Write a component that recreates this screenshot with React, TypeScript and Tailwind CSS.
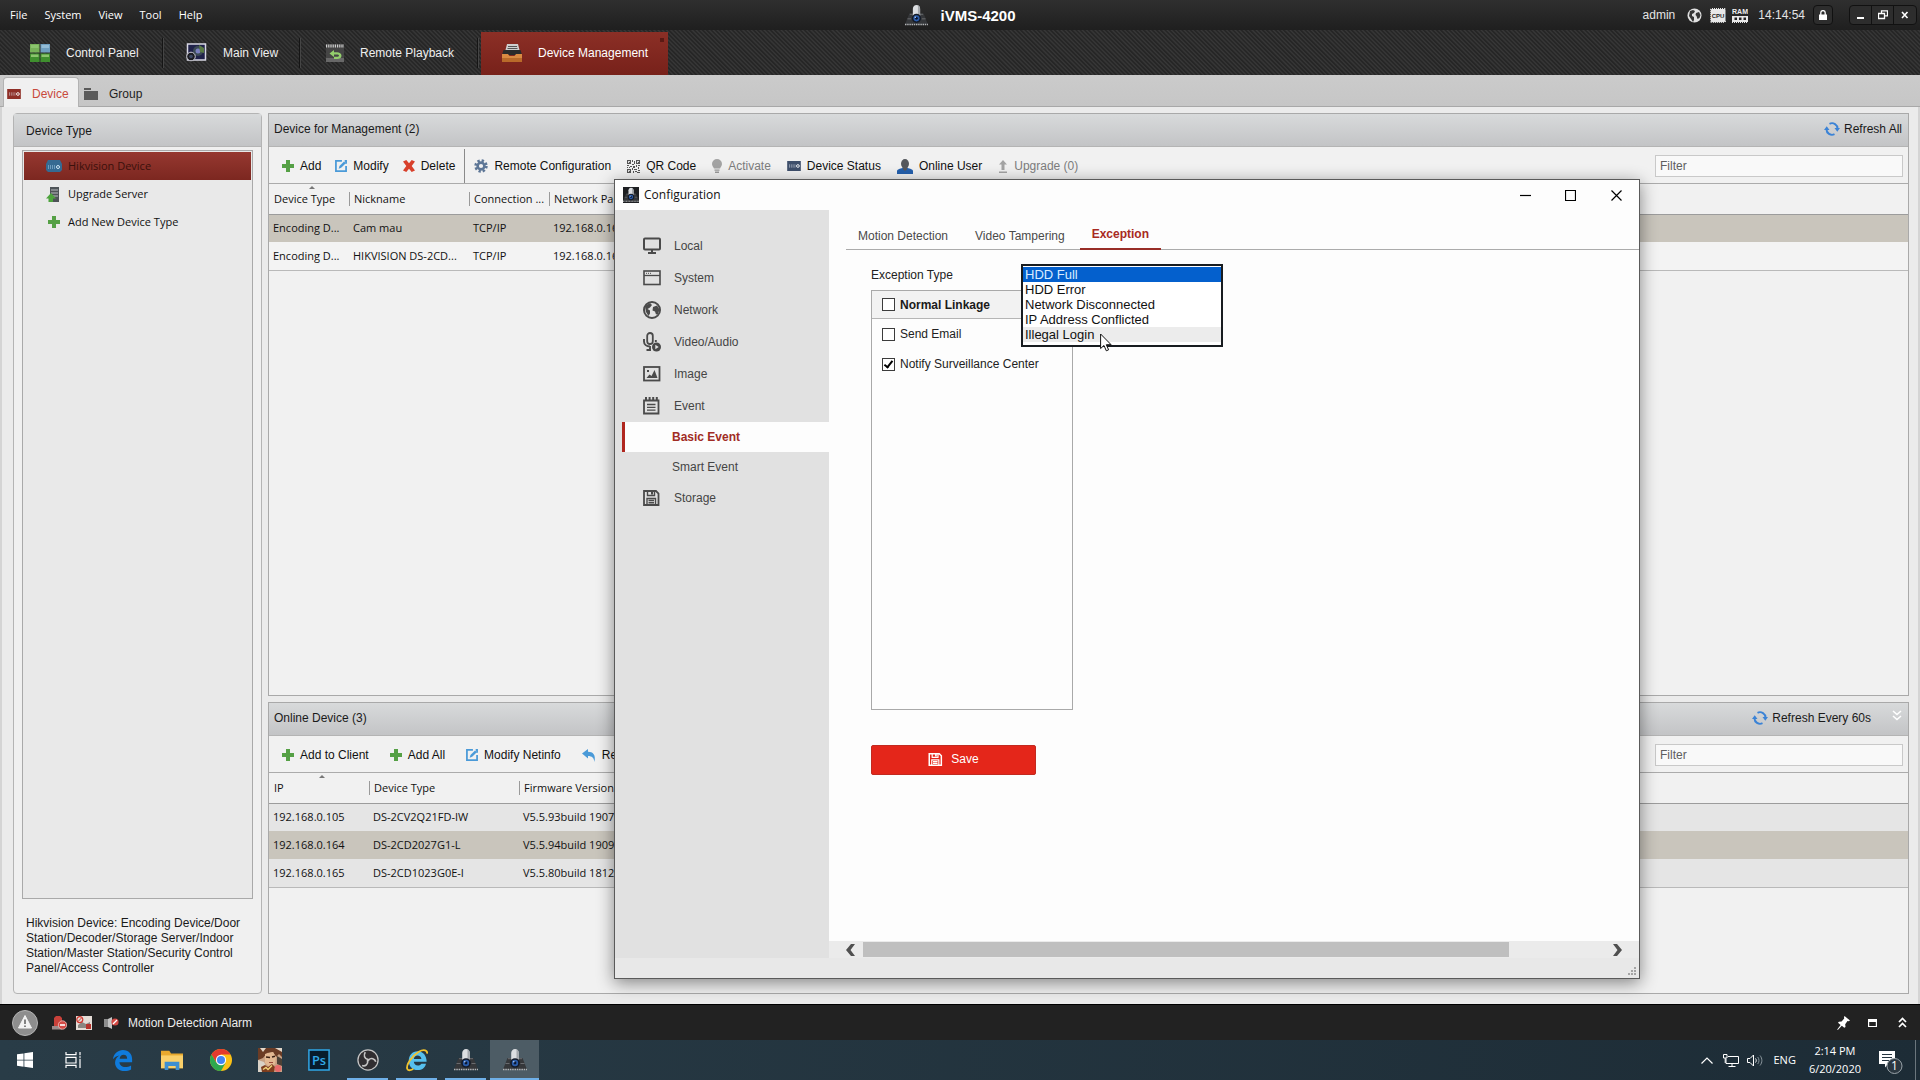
import React, { useState } from 'react';
import clsx from 'clsx';

type IconProps = { className?: string };

/* ---------- Shared drawings ---------- */

function CameraLogo({ className }: IconProps) {
  return (
    <svg viewBox="0 0 24 22" className={className} aria-hidden="true">
      <path d="M4.500 9h15l4.500 11.500H0z" fill="#35373a" />
      <path d="M5 9.700h14M2.500 14.500h4M17.500 14.500h4" stroke="#77797c" strokeWidth=".8" />
      <path d="M0 20.500h24" stroke="#b4b6b8" strokeWidth="1.600" strokeDasharray="1.500 .8" />
      <path d="M8.200 4C8.200 1.800 9.900 0 12 0s3.800 1.800 3.800 4v7.500H8.200z" fill="#dcdee1" />
      <path d="M13.500 .3c1.400.6 2.300 2 2.300 3.700v7.500h-2.300z" fill="#a4a8ad" />
      <circle cx="12" cy="14" r="4.800" fill="#141b28" />
      <circle cx="12" cy="14" r="3.200" fill="#2a5cab" />
      <circle cx="12" cy="14" r="1.400" fill="#0b1730" />
      <circle cx="10.800" cy="12.800" r=".8" fill="#bcd4f5" />
    </svg>
  );
}

function PlusIcon({ className }: IconProps) {
  return (
    <svg viewBox="0 0 12 12" className={className} aria-hidden="true">
      <path d="M4 0h4v4h4v4H8v4H4V8H0V4h4z" fill="#55a045" />
    </svg>
  );
}

function ModifyIcon({ className }: IconProps) {
  return (
    <svg viewBox="0 0 13 13" className={className} aria-hidden="true">
      <path d="M7.500 1H1v11h11V6.500M12 4V1h-1.500" fill="none" stroke="#4a9ad8" strokeWidth="1.900" />
      <path d="M4 9.500l.8-3L9.800 1.500l1.900 1.900-5 5z" fill="#4a9ad8" />
    </svg>
  );
}

function DeleteIcon({ className }: IconProps) {
  return (
    <svg viewBox="0 0 12 12" className={className} aria-hidden="true">
      <path d="M0 1.500L3.300 0 6 3.300 8.700 0 12 1.500 8.700 6l3.300 4.500L8.700 12 6 8.700 3.300 12 0 10.500 3.300 6z" fill="#d8402b" />
    </svg>
  );
}

function GearIcon({ className }: IconProps) {
  return (
    <svg viewBox="0 0 14 14" className={className} aria-hidden="true">
      <circle cx="7" cy="7" r="5.400" fill="none" stroke="#5d7696" strokeWidth="2.600" strokeDasharray="2.300 1.940" />
      <circle cx="7" cy="7" r="3.400" fill="none" stroke="#5d7696" strokeWidth="2.600" />
    </svg>
  );
}

function QrIcon({ className }: IconProps) {
  return (
    <svg viewBox="0 0 13 13" className={className} shapeRendering="crispEdges" aria-hidden="true">
      <path
        d="M0 0h4v4H0zM9 0h4v4H9zM0 9h4v4H0zM5 0h1v2H5zM7 1h1v3H7zM5 4h2v1H5zM0 5h2v1H0zM3 6h2v1H3zM6 6h2v2H6zM9 5h1v2H9zM11 5h2v1h-2zM11 7h1v2h-1zM0 7h1v1H0zM5 8h1v2H5zM7 9h2v1H7zM9 9h1v1H9zM11 10h2v1h-2zM6 11h1v2H6zM8 11h2v1H8zM10 12h3v1h-3zM2 7h1v1H2z"
        fill="#555"
      />
      <path d="M1 1h2v2H1zM10 1h2v2h-2zM1 10h2v2H1z" fill="#ddd" />
      <path d="M1.500 1.500h1v1h-1zM10.500 1.500h1v1h-1zM1.500 10.500h1v1h-1z" fill="#555" />
    </svg>
  );
}

function BulbIcon({ className }: IconProps) {
  return (
    <svg viewBox="0 0 10 14" className={className} aria-hidden="true">
      <path d="M5 0a5 5 0 0 1 5 5c0 2-1.500 3-2 4.500H2C1.500 8 0 7 0 5a5 5 0 0 1 5-5z" fill="#a3a3a3" />
      <path d="M2.500 10.500h5v1.200h-5zM3 12.500h4V14H3z" fill="#9a9a9a" />
    </svg>
  );
}

function RecorderIcon({ className }: IconProps) {
  return (
    <svg viewBox="0 0 15 11" className={className} aria-hidden="true">
      <path d="M0 0h15v11H0z" fill="currentColor" />
      <path d="M2 4.500h7M2 6.500h7" stroke="#dfe5ee" strokeWidth="1" strokeDasharray="1 1" />
      <circle cx="11.800" cy="5.500" r="1.500" fill="none" stroke="#fff" />
    </svg>
  );
}

function UserIcon({ className }: IconProps) {
  return (
    <svg viewBox="0 0 16 15" className={className} aria-hidden="true">
      <path d="M0 15v-3C0 10.500 3 9.500 5.500 9h5c2.500.5 5.500 1.500 5.500 3v3z" fill="#2560ad" />
      <ellipse cx="8" cy="4.800" rx="4" ry="4.800" fill="#54575c" />
      <path d="M6 8h4v2.500L8 12l-2-1.500z" fill="#55585d" />
    </svg>
  );
}

function UpgradeIcon({ className }: IconProps) {
  return (
    <svg viewBox="0 0 10 13" className={className} aria-hidden="true">
      <path d="M5 0l4 4.500H6.500V10h-3V4.500H1zM1 11.500h8V13H1z" fill="#a3a3a3" />
    </svg>
  );
}

function ResetIcon({ className }: IconProps) {
  return (
    <svg viewBox="0 0 14 13" className={className} aria-hidden="true">
      <path d="M0 4.500L6 0v2.700c5 0 8 3 6.500 10.300C12 9 10 7 6 7v2.500z" fill="#4a9ad8" />
    </svg>
  );
}

function RefreshIcon({ className }: IconProps) {
  return (
    <svg viewBox="0 0 16 14" className={className} aria-hidden="true">
      <path d="M5.500 1.800a5.500 5.500 0 0 1 8 5.200M10.500 12.200a5.500 5.500 0 0 1-8-5.200" fill="none" stroke="#3b83d6" strokeWidth="1.900" />
      <path d="M10.500 6H16l-2.700 3.800zM0 8l2.700-3.800L5.500 8z" fill="#3b83d6" />
    </svg>
  );
}

/* ---------- Title bar and module navigation ---------- */

const MENUS = ['File', 'System', 'View', 'Tool', 'Help'];

function TitleBar() {
  return (
    <header className="relative flex h-[30px] items-center justify-between bg-linear-to-b from-[#2f2f2f] to-[#1f1f1f] px-[10px] text-white">
      <nav className="flex gap-[17px] font-['Open_Sans',sans-serif] text-[11px]">
        {MENUS.map(m => (
          <button key={m} type="button">{m}</button>
        ))}
      </nav>
      <div className="absolute left-1/2 top-0 flex h-[30px] -translate-x-1/2 items-center gap-3">
        <CameraLogo className="h-[21px] w-6" />
        <h1 className="pt-0.5 text-[15px] font-bold">iVMS-4200</h1>
      </div>
      <div className="flex items-center text-xs text-[#e4e4e4]">
        <span className="mr-3">admin</span>
        <svg viewBox="0 0 15 15" className="mr-2 size-[15px]" aria-hidden="true">
          <circle cx="7.500" cy="7.500" r="7" fill="#e0e0e0" />
          <path d="M3 3l3-1 2 1-1 2-2 1v2l2 1v3l-1 2-2-3-2-3zM9 5l3-1 1.500 3-1 3-2 1-1-3-1-1z" fill="#333" />
        </svg>
        <svg viewBox="0 0 16 15" className="mr-[6px] h-[15px] w-4" aria-hidden="true">
          <rect x="1" y="1" width="14" height="13" rx="1" fill="#e8e8e8" stroke="#e8e8e8" strokeWidth="2" strokeDasharray="1 1" />
          <text x="8" y="10" textAnchor="middle" fontSize="6" fontWeight="700" fill="#1c1c1c">CPU</text>
        </svg>
        <svg viewBox="0 0 16 15" className="mr-[10px] h-[15px] w-4" aria-hidden="true">
          <text x="8" y="6" textAnchor="middle" fontSize="7" fontWeight="700" fill="#efefef">RAM</text>
          <path d="M0 8h16v6H0z" fill="#e8e8e8" />
          <path d="M2.500 9.500h2.500v2.500H2.500zM7 9.500h2.500v2.500H7zM11.500 9.500H14v2.500h-2.500z" fill="#222" />
          <path d="M0 14.500h16" stroke="#e8e8e8" strokeDasharray="1 1" />
        </svg>
        <time className="mr-2">14:14:54</time>
        <button type="button" aria-label="Lock" className="mr-4 flex h-5 w-5 items-center justify-center rounded-sm border border-[#111] bg-[#2d2d2d]">
          <svg viewBox="0 0 8 10" className="h-[10px] w-2">
            <path d="M0 4.500h8V10H0z" fill="#fff" />
            <path d="M1.800 5V2.800a2.200 2.200 0 0 1 4.400 0V5" fill="none" stroke="#fff" strokeWidth="1.300" />
          </svg>
        </button>
        <div className="-mr-[7px] flex rounded-sm border border-[#111] bg-[#2d2d2d]">
          <button type="button" aria-label="Minimize" className="flex h-[18px] w-[22px] items-center justify-center border-r border-[#111]">
            <svg viewBox="0 0 10 10" className="size-[10px]"><path d="M1 7h7v2H1z" fill="#fff" /></svg>
          </button>
          <button type="button" aria-label="Restore" className="flex h-[18px] w-[22px] items-center justify-center border-r border-[#111]">
            <svg viewBox="0 0 10 10" className="size-[10px]"><path d="M3.500 3V.8h6v5H7.200M.5 3.500h6v5h-6z" fill="none" stroke="#fff" strokeWidth="1.300" /></svg>
          </button>
          <button type="button" aria-label="Close" className="flex h-[18px] w-[22px] items-center justify-center">
            <svg viewBox="0 0 10 10" className="size-[10px]"><path d="M2 2l5.500 6M7.500 2L2 8" fill="none" stroke="#fff" strokeWidth="1.600" /></svg>
          </button>
        </div>
      </div>
    </header>
  );
}

function ControlPanelIcon() {
  return (
    <svg viewBox="0 0 20 18" className="h-[18px] w-5" aria-hidden="true">
      <path d="M0 0h9.500v8.500H0z" fill="#77b259" />
      <path d="M10.500 0H20v8.500h-9.500z" fill="#6f9fc0" />
      <path d="M0 9.500h9.500V18H0zM10.500 9.500H20V18h-9.500z" fill="#3f8f2e" />
      <path d="M1 1h7.500v3H1zM1 10.500h7.500v2.500H1zM11.500 10.500H19v2.500h-7.500z" fill="#8cc46e" />
      <path d="M11.500 1H19v3h-7.500z" fill="#93bcd6" />
    </svg>
  );
}

function MainViewIcon() {
  return (
    <svg viewBox="0 0 22 19" className="h-[19px] w-[22px]" aria-hidden="true">
      <path d="M2.500 1h18v16h-18z" fill="#20224a" stroke="#d8d8e4" strokeWidth="1.500" />
      <circle cx="13" cy="8" r="5" fill="#3c4a55" />
      <circle cx="13" cy="8" r="2.500" fill="#7a7fc0" />
      <path d="M14 2l5 3v5l-4-1z" fill="#5a7a45" />
      <circle cx="6" cy="13.500" r="4.300" fill="#1c1c22" stroke="#c9c9d2" />
      <circle cx="6" cy="13.500" r="1.800" fill="#3e4a66" />
    </svg>
  );
}

function PlaybackIcon() {
  return (
    <svg viewBox="0 0 18 18" className="size-[18px]" aria-hidden="true">
      <path d="M0 0h18v18H0z" fill="#454545" />
      <path d="M0 2h18" stroke="#cfcfcf" strokeWidth="3" strokeDasharray="1.200 1" />
      <path d="M0 14h18v4H0z" fill="#686868" />
      <path d="M3.500 9.500L8 6v2.200h3c2.500 0 4.500 1.300 4.500 3.600S13.500 15 11 15H8v-2.200h3c1.200 0 2-.3 2-1.200s-.8-1.200-2-1.200H8V13z" fill="#93cf6c" />
    </svg>
  );
}

function DeviceManagementIcon() {
  return (
    <svg viewBox="0 0 20 18" className="h-[18px] w-5" aria-hidden="true">
      <path d="M5 0h11l2 8H3z" fill="#cfcfcf" />
      <path d="M6 2.500h9M5.500 4.500h10" stroke="#555" />
      <path d="M1.500 6h17L20 11H0z" fill="#2b2b2b" />
      <path d="M0 10h6l1.500 2h5L14 10h6v8H0z" fill="#d98a42" />
      <path d="M0 14h20v4H0z" fill="#b96a2a" />
    </svg>
  );
}

const MODULES = [
  { label: 'Control Panel', Icon: ControlPanelIcon, box: 'w-[163px] pl-[30px] gap-4' },
  { label: 'Main View', Icon: MainViewIcon, box: 'w-[137px] pl-[22px] gap-4' },
  { label: 'Remote Playback', Icon: PlaybackIcon, box: 'w-[178px] pl-[26px] gap-4' },
];

function ModuleBar() {
  return (
    <nav className="flex h-[45px] items-center bg-[#303030] bg-[repeating-linear-gradient(45deg,#262626_0px,#262626_1px,#383838_2px,#2e2e2e_3px)] text-xs text-[#efefef]">
      {MODULES.map(({ label, Icon, box }) => (
        <button key={label} type="button" className={clsx('flex h-[30px] items-center border-r border-[#151515] shadow-[1px_0_0_#454545]', box)}>
          <Icon />
          {label}
        </button>
      ))}
      <button type="button" className="relative ml-[3px] mt-0.5 flex h-[43px] w-[187px] items-center gap-4 bg-linear-to-b from-[#8c2f26] to-[#77211a] pb-0.5 pl-[21px] text-white">
        <DeviceManagementIcon />
        Device Management
        <span className="absolute right-1 top-1.5 size-1 bg-[#5a1a14]" />
      </button>
    </nav>
  );
}

function PageTabs() {
  return (
    <div role="tablist" className="flex h-8 items-end border-b border-[#a8a8a8] bg-linear-to-b from-[#cbcbcb] to-[#c6c6c6] pl-[3px] text-xs">
      <button role="tab" aria-selected="true" type="button" className="-mb-px flex h-[30px] w-[76px] items-center gap-[10px] rounded-t border border-b-0 border-[#b2b2b2] bg-[#f0f0f0] pl-0.5 pt-0.5 text-[#c84a3c]">
        <RecorderIcon className="h-[10px] w-4 text-[#8f2f27]" />
        Device
      </button>
      <button role="tab" aria-selected="false" type="button" className="flex h-6 items-center gap-[11px] pl-[5px] text-[#1e1e1e]">
        <svg viewBox="0 0 14 12" className="h-3 w-[14px]" aria-hidden="true">
          <path d="M0 0h7v2H0zM0 3h14v9H0z" fill="#5a5a5a" />
        </svg>
        Group
      </button>
    </div>
  );
}

/* ---------- Left panel ---------- */

function DeviceTypePanel() {
  return (
    <aside className="flex w-[249px] shrink-0 flex-col rounded-sm border border-[#b4b4b4] bg-[#f0f0f0]">
      <h2 className="flex h-[33px] items-center border-b border-[#b4b4b4] bg-linear-to-b from-[#d8dadb] to-[#c3c4c6] pl-3 pt-0.5 text-xs text-[#1a1a1a]">Device Type</h2>
      <ul className="mx-2 mt-[3px] flex-1 border border-[#a9a9a9] bg-[#e9e9e9] p-px font-['Open_Sans',sans-serif] text-[11px] text-[#111]">
        <li className="flex h-7 items-center gap-[6px] bg-linear-to-b from-[#963830] to-[#7c2720] pl-[22px] text-[#3a100c]">
          <svg viewBox="0 0 16 12" className="h-3 w-4" aria-hidden="true">
            <path d="M2 0h12l2 4v6l-2 2H2l-2-2V4z" fill="#356a92" />
            <path d="M2 6h7M2 8h7" stroke="#a9d0ea" strokeDasharray="1 1" />
            <circle cx="12" cy="7" r="1.500" fill="none" stroke="#cfe6f5" />
          </svg>
          Hikvision Device
        </li>
        <li className="flex h-7 items-center gap-[6px] pl-[22px]">
          <svg viewBox="0 0 16 15" className="h-[15px] w-4" aria-hidden="true">
            <path d="M4 0h9v15H4z" fill="#4e5357" />
            <path d="M5 3h7M5 6h7M5 9h7" stroke="#b8bcc0" />
            <path d="M5 6l5 5.500H7V15H2.500v-3.500H0z" fill="#4da33c" />
          </svg>
          Upgrade Server
        </li>
        <li className="flex h-7 items-center gap-[6px] pl-[22px]">
          <PlusIcon className="mx-0.5 size-3" />
          Add New Device Type
        </li>
      </ul>
      <p className="h-[94px] px-3 pt-[17px] text-xs leading-[15px] text-[#1a1a1a]">
        Hikvision Device: Encoding Device/Door Station/Decoder/Storage Server/Indoor Station/Master Station/Security Control Panel/Access Controller
      </p>
    </aside>
  );
}

/* ---------- Device tables ---------- */

function ToolButton({ icon, label, disabled }: { icon: React.ReactNode; label: string; disabled?: boolean }) {
  return (
    <button type="button" disabled={disabled} className="flex items-center gap-[6px] whitespace-nowrap text-[#111] disabled:text-[#7d7d7d]">
      {icon}
      {label}
    </button>
  );
}

function FilterBox({ id }: { id: string }) {
  return (
    <>
      <label htmlFor={id} className="sr-only">Filter</label>
      <input id={id} type="text" placeholder="Filter" className="ml-auto mr-[5px] h-[22px] w-[248px] border border-[#c9c9c9] bg-[#f9f9f9] px-1 text-xs placeholder:text-[#5e5e5e]" />
    </>
  );
}

interface GridProps {
  columns: { label: string; width?: string }[];
  rows: string[][];
  selected: number;
  shaded?: boolean;
}

function DeviceGrid({ columns, rows, selected, shaded }: GridProps) {
  return (
    <table className="w-full table-fixed border-collapse font-['Open_Sans',sans-serif] text-[11px] text-[#111]">
      <thead>
        <tr className="h-[30px] border-b border-[#9c9c9c]">
          {columns.map((c, i) => (
            <th key={c.label} className={clsx('relative p-0 text-left font-normal', c.width)}>
              {i === 0 && (
                <svg viewBox="0 0 6 3" className="absolute left-1/2 top-0.5 h-[3px] w-[6px]" aria-hidden="true">
                  <path d="M3 0l3 3H0z" fill="#777" />
                </svg>
              )}
              <div className={clsx('overflow-hidden whitespace-nowrap border-l pl-1 leading-[14px]', i === 0 ? 'border-transparent' : 'border-[#9a9a9a]')}>{c.label}</div>
            </th>
          ))}
        </tr>
      </thead>
      <tbody>
        {rows.map((row, r) => (
          <tr key={row[0] + r} className={clsx('h-7 last:border-b last:border-[#b9b9b9]', r === selected ? 'bg-[#c9c5bc]' : shaded ? 'bg-[#e5e5e5]' : 'bg-[#f3f3f3]')}>
            {row.map((cell, i) => (
              <td key={i} className="overflow-hidden whitespace-nowrap py-0 pl-1 pr-0">{cell}</td>
            ))}
          </tr>
        ))}
      </tbody>
    </table>
  );
}

const PANEL_HEAD = 'flex h-[33px] shrink-0 items-center border-b border-[#b4b4b4] bg-linear-to-b from-[#d8dadb] to-[#c3c4c6] pb-[3px] pl-[5px] text-xs text-[#1a1a1a]';
const TOOLBAR = 'flex h-[37px] shrink-0 items-center border-b border-[#ababab] pl-[13px] pt-0.5 text-xs';

function ManagementPanel() {
  return (
    <section className="flex h-[583px] shrink-0 flex-col border border-[#a9a9a9] bg-[#f1f1f1]">
      <div className={PANEL_HEAD}>
        <h2>Device for Management (2)</h2>
        <button type="button" className="ml-auto mr-[6px] flex items-center gap-1">
          <RefreshIcon className="h-[14px] w-4" />
          Refresh All
        </button>
      </div>
      <div className={TOOLBAR}>
        <div className="flex h-full items-center gap-[14px] border-r border-[#8a8a8a] pr-[9px]">
          <ToolButton icon={<PlusIcon className="size-3" />} label="Add" />
          <ToolButton icon={<ModifyIcon className="size-3" />} label="Modify" />
          <ToolButton icon={<DeleteIcon className="size-3" />} label="Delete" />
        </div>
        <div className="flex items-center gap-4 pl-[9px]">
          <ToolButton icon={<GearIcon className="size-[14px]" />} label="Remote Configuration" />
          <ToolButton icon={<QrIcon className="size-[13px]" />} label="QR Code" />
          <ToolButton icon={<BulbIcon className="h-[14px] w-[10px]" />} label="Activate" disabled />
          <ToolButton icon={<RecorderIcon className="h-[10px] w-[14px] text-[#3e4f6b]" />} label="Device Status" />
          <ToolButton icon={<UserIcon className="h-[15px] w-4" />} label="Online User" />
          <ToolButton icon={<UpgradeIcon className="h-[13px] w-[10px]" />} label="Upgrade (0)" disabled />
        </div>
        <FilterBox id="device-filter" />
      </div>
      <DeviceGrid
        columns={[
          { label: 'Device Type', width: 'w-20' },
          { label: 'Nickname', width: 'w-[120px]' },
          { label: 'Connection ...', width: 'w-20' },
          { label: 'Network Parameters' },
        ]}
        rows={[
          ['Encoding D...', 'Cam mau', 'TCP/IP', '192.168.0.164:8000'],
          ['Encoding D...', 'HIKVISION DS-2CD...', 'TCP/IP', '192.168.0.165:8000'],
        ]}
        selected={0}
      />
    </section>
  );
}

function OnlinePanel() {
  return (
    <section className="flex flex-1 flex-col border border-[#a9a9a9] bg-[#f1f1f1]">
      <div className={PANEL_HEAD}>
        <h2>Online Device (3)</h2>
        <button type="button" className="ml-auto flex items-center gap-1">
          <RefreshIcon className="h-[14px] w-4" />
          Refresh Every 60s
        </button>
        <button type="button" aria-label="Collapse" className="ml-[21px] mr-[6px]">
          <svg viewBox="0 0 10 11" className="mb-1 h-[11px] w-[10px]">
            <path d="M1 1l4 3.500L9 1M1 6l4 3.500L9 6" fill="none" stroke="#fff" strokeWidth="1.600" />
          </svg>
        </button>
      </div>
      <div className={TOOLBAR}>
        <div className="flex items-center gap-[21px]">
          <ToolButton icon={<PlusIcon className="size-3" />} label="Add to Client" />
          <ToolButton icon={<PlusIcon className="size-3" />} label="Add All" />
          <ToolButton icon={<ModifyIcon className="size-3" />} label="Modify Netinfo" />
          <ToolButton icon={<ResetIcon className="h-[13px] w-[14px]" />} label="Reset Password" />
        </div>
        <FilterBox id="online-filter" />
      </div>
      <DeviceGrid
        columns={[
          { label: 'IP', width: 'w-[100px]' },
          { label: 'Device Type', width: 'w-[150px]' },
          { label: 'Firmware Version' },
        ]}
        rows={[
          ['192.168.0.105', 'DS-2CV2Q21FD-IW', 'V5.5.93build 190710'],
          ['192.168.0.164', 'DS-2CD2027G1-L', 'V5.5.94build 190909'],
          ['192.168.0.165', 'DS-2CD1023G0E-I', 'V5.5.80build 181210'],
        ]}
        selected={1}
        shaded
      />
    </section>
  );
}

/* ---------- Configuration window ---------- */

const NAV_ICONS: Record<string, React.ReactNode> = {
  Local: (
    <>
      <rect x="1" y="1.500" width="16" height="11" rx="1" fill="none" stroke="#4a4a4a" strokeWidth="2" />
      <path d="M8 12h2v3h3v2H5v-2h3z" fill="#4a4a4a" />
    </>
  ),
  System: (
    <>
      <rect x="1" y="2" width="16" height="13.500" fill="none" stroke="#4a4a4a" strokeWidth="1.600" />
      <path d="M1 6.500h16" stroke="#4a4a4a" strokeWidth="1.300" />
      <path d="M3 4.300h6" stroke="#4a4a4a" strokeDasharray="1 1" />
    </>
  ),
  Network: (
    <>
      <circle cx="9" cy="9" r="8" fill="none" stroke="#4a4a4a" strokeWidth="2" />
      <path d="M2 5l5-3 2 2-2 2.500L4.500 8 7 9.500v3L5.500 15 3 11zM10 6l4-1.500 2.500 4L15 13l-2 .5-1-3-2.500-1z" fill="#4a4a4a" />
    </>
  ),
  'Video/Audio': (
    <>
      <rect x="4.200" y="0" width="5.600" height="11" rx="2.800" fill="none" stroke="#4a4a4a" strokeWidth="1.800" />
      <path d="M1 6v2.500c0 3 2.500 5 6 5M7 13v4M3.500 17H8M12.800 7v2" fill="none" stroke="#4a4a4a" strokeWidth="1.900" />
      <circle cx="13.500" cy="14" r="4.500" fill="#4a4a4a" />
      <path d="M12.300 11.800l3.400 2.200-3.400 2.200z" fill="#e1e1e1" />
    </>
  ),
  Image: (
    <>
      <rect x="1" y="2" width="15.500" height="13.500" fill="none" stroke="#4a4a4a" strokeWidth="1.800" />
      <path d="M3.500 13l3-3.500L8.500 11l3-6 3 8zM4 5h2v2H4z" fill="#4a4a4a" />
    </>
  ),
  Event: (
    <>
      <path d="M1 3.500h14.500v13H1z" fill="none" stroke="#4a4a4a" strokeWidth="1.800" />
      <path d="M2 1.500h13" stroke="#4a4a4a" strokeWidth="3" strokeDasharray="2 1.600" />
      <path d="M4 7.500h8.500M4 10.300h8.500M4 13.100h8.500" stroke="#4a4a4a" strokeWidth="1.300" />
    </>
  ),
  Storage: <SaveShape color="#4a4a4a" />,
};

function SaveShape({ color }: { color: string }) {
  return (
    <>
      <path d="M1 2h12l2.500 2.500V16H1z" fill="none" stroke={color} strokeWidth="1.800" />
      <path d="M4.500 2v4.500h7V2M4 15.500V9.500h8.500v6M5.500 11.500h5.500M5.500 13.700h5.500" fill="none" stroke={color} strokeWidth="1.400" />
      <path d="M8 2.500h2v3H8z" fill={color} />
    </>
  );
}

function NavItem({ label }: { label: string }) {
  return (
    <li>
      <a href="#" className="flex h-8 items-center gap-[13px] pl-7">
        <svg viewBox="0 0 18 18" className="size-[18px] overflow-visible" aria-hidden="true">{NAV_ICONS[label]}</svg>
        {label}
      </a>
    </li>
  );
}

const CONFIG_TABS = ['Motion Detection', 'Video Tampering', 'Exception'];
const EXCEPTIONS = ['HDD Full', 'HDD Error', 'Network Disconnected', 'IP Address Conflicted', 'Illegal Login'];
const CHECKBOX = "relative size-[13px] shrink-0 appearance-none border border-[#3c3c3c] bg-white checked:after:absolute checked:after:left-[3px] checked:after:top-0 checked:after:h-[9px] checked:after:w-[5px] checked:after:rotate-[38deg] checked:after:border-b-2 checked:after:border-r-2 checked:after:border-black checked:after:content-['']";

function ExceptionForm() {
  const [type, setType] = useState('HDD Full');
  const [linkage, setLinkage] = useState({ all: false, email: false, center: true });

  const toggle = (key: keyof typeof linkage) => () => setLinkage({ ...linkage, [key]: !linkage[key] });

  return (
    <form className="relative pl-[25px] pt-[17px] text-xs text-[#222]" onSubmit={e => e.preventDefault()}>
      <label htmlFor="exception-type" className="block h-[23px] leading-4">Exception Type</label>
      {/* open drop-down list floats above the linkage box */}
      <select
        id="exception-type"
        size={5}
        value={type}
        onChange={e => setType(e.target.value)}
        className="absolute left-[175px] top-[14px] h-[83px] w-[202px] overflow-hidden rounded-none border-2 border-[#181c20] bg-white px-0 py-px text-[13px] text-[#111] outline-none"
      >
        {EXCEPTIONS.map(name => (
          <option
            key={name}
            className="h-[15px] min-h-[15px] px-0.5 py-0 leading-[15px] checked:bg-[#0460cd] checked:bg-linear-to-r checked:from-[#0460cd] checked:to-[#0460cd] checked:text-[#d9ecff] last:bg-[#ececec]"
          >
            {name}
          </option>
        ))}
      </select>
      <svg viewBox="0 0 12 19" className="absolute left-[254px] top-[83px] h-[19px] w-3" aria-hidden="true">
        <path d="M.6 1v14.500l3.400-3 2.300 5.300 2.300-1-2.300-5.100h4.800z" fill="#fff" stroke="#111" strokeWidth="1" />
      </svg>
      <fieldset className="h-[420px] w-[202px] border border-[#a9a9a9] bg-[#fdfdfd]">
        <label className="flex h-7 items-center gap-[5px] border-b border-[#b5b5b5] bg-[#f2f2f2] pl-[10px] font-bold text-[#1a1a1a]">
          <input type="checkbox" className={CHECKBOX} checked={linkage.all} onChange={toggle('all')} />
          Normal Linkage
        </label>
        <label className="flex h-[30px] items-center gap-[5px] pl-[10px]">
          <input type="checkbox" className={CHECKBOX} checked={linkage.email} onChange={toggle('email')} />
          Send Email
        </label>
        <label className="flex h-[30px] items-center gap-[5px] pl-[10px]">
          <input type="checkbox" className={CHECKBOX} checked={linkage.center} onChange={toggle('center')} />
          Notify Surveillance Center
        </label>
      </fieldset>
      <button type="submit" className="mt-[35px] flex h-[30px] w-[165px] items-center justify-center gap-2 rounded-xs border border-[#c22a20] bg-[#e4261a] pb-0.5 text-white">
        <svg viewBox="0 0 17 18" className="size-[15px]" aria-hidden="true"><SaveShape color="#fff" /></svg>
        Save
      </button>
    </form>
  );
}

function ConfigurationWindow() {
  return (
    <div role="dialog" aria-label="Configuration" className="absolute left-[614px] top-[179px] flex h-[800px] w-[1026px] flex-col border border-[#5a5a5a] bg-[#fdfdfd] shadow-[0_4px_16px_rgba(0,0,0,0.45)]">
      <div className="flex h-[30px] shrink-0 items-center pl-2 font-['Open_Sans',sans-serif] text-xs text-[#111]">
        <span className="mr-[5px] flex h-4 w-4 items-end bg-[#1d1f22]">
          <CameraLogo className="h-4 w-4" />
        </span>
        Configuration
        <div className="ml-auto flex">
          <button type="button" aria-label="Minimize" className="flex h-7 w-[45px] items-center justify-center">
            <svg viewBox="0 0 11 11" className="size-[11px]"><path d="M0 5.500h11" stroke="#000" strokeWidth="1.200" /></svg>
          </button>
          <button type="button" aria-label="Maximize" className="flex h-7 w-[45px] items-center justify-center">
            <svg viewBox="0 0 11 11" className="size-[11px]"><path d="M.5.5h10v10H.5z" fill="none" stroke="#000" strokeWidth="1.200" /></svg>
          </button>
          <button type="button" aria-label="Close" className="flex h-7 w-[46px] items-center justify-center">
            <svg viewBox="0 0 11 11" className="size-[11px]"><path d="M.5.5l10 10M10.500.5l-10 10" stroke="#000" strokeWidth="1.200" /></svg>
          </button>
        </div>
      </div>
      <div className="flex flex-1">
        <nav className="w-[214px] shrink-0 bg-[#e1e1e1] pt-5 text-xs text-[#454545]">
          <ul>
            {['Local', 'System', 'Network', 'Video/Audio', 'Image', 'Event'].map(label => (
              <NavItem key={label} label={label} />
            ))}
            <li>
              <a href="#" className="ml-[7px] flex h-[30px] items-center border-l-3 border-[#b0261e] bg-[#fdfdfd] pl-[47px] font-bold text-[#a12c24]">Basic Event</a>
            </li>
            <li>
              <a href="#" className="flex h-[30px] items-center pl-[57px]">Smart Event</a>
            </li>
            <NavItem label="Storage" />
          </ul>
        </nav>
        <div className="flex min-w-0 flex-1 flex-col">
          <div className="flex-1 pl-[17px]">
            <div role="tablist" className="flex h-10 items-end gap-[3px] border-b border-[#ababab] text-xs text-[#4a4a4a]">
              {CONFIG_TABS.map(tab => (
                <button
                  key={tab}
                  role="tab"
                  type="button"
                  aria-selected={tab === 'Exception'}
                  className={clsx(
                    'h-[26px] px-3',
                    tab === 'Exception' && '-mb-px border-b-2 border-[#982d27] pb-1 font-bold text-[#a82a22]'
                  )}
                >
                  {tab}
                </button>
              ))}
            </div>
            <ExceptionForm />
          </div>
          <div className="flex h-[17px] items-center bg-[#ebebeb] px-4">
            <button type="button" aria-label="Scroll left">
              <svg viewBox="0 0 10 12" className="h-3 w-[10px]"><path d="M6 0h4L5.500 6l4.500 6H6L1 6z" fill="#505050" /></svg>
            </button>
            <div className="mx-2 h-[15px] flex-1">
              <div className="h-full w-[87%] bg-[#bfbfbf]" />
            </div>
            <button type="button" aria-label="Scroll right">
              <svg viewBox="0 0 10 12" className="h-3 w-[10px]"><path d="M4 0H0l4.500 6L0 12h4l5-6z" fill="#505050" /></svg>
            </button>
          </div>
        </div>
      </div>
      <div className="flex h-5 shrink-0 items-end justify-end bg-[#e8e8e8] p-[3px]">
        <svg viewBox="0 0 8 8" className="size-2" aria-hidden="true">
          <path d="M6 0h2v2H6zM3 3h2v2H3zM6 3h2v2H6zM0 6h2v2H0zM3 6h2v2H3zM6 6h2v2H6z" fill="#a5a5a5" />
        </svg>
      </div>
    </div>
  );
}

/* ---------- Alarm bar ---------- */

function AlarmBar() {
  return (
    <footer className="flex h-9 items-center border-t border-black bg-[#222] pl-3 pr-[13px] text-xs text-[#ececec]">
      <svg viewBox="0 0 26 26" className="size-[26px]" aria-hidden="true">
        <circle cx="13" cy="13" r="12.500" fill="#8e8e8e" stroke="#b5b5b5" />
        <path d="M13 5.500l6.500 12.500h-13z" fill="#f3f3f3" stroke="#f3f3f3" strokeLinejoin="round" />
        <path d="M13 9.500v4.500M13 15.500v1.500" stroke="#777" strokeWidth="1.800" />
      </svg>
      <svg viewBox="0 0 15 14" className="ml-[14px] h-[14px] w-[15px]" aria-hidden="true">
        <path d="M2 11V2L4 0h4l2 2v9z" fill="#c9413a" />
        <path d="M0 10h10v3.500H0z" fill="#9b8b8b" />
        <circle cx="10.500" cy="9" r="4.200" fill="#d44a45" stroke="#eec0bd" strokeWidth=".8" />
        <path d="M8 9h5" stroke="#fff" strokeWidth="1.600" />
      </svg>
      <svg viewBox="0 0 16 14" className="ml-[9px] h-[14px] w-4" aria-hidden="true">
        <path d="M0 0h16v14H0z" fill="#e4dcd6" />
        <path d="M2 9l4-3 4 2 4-2v6H2z" fill="#8a8580" />
        <path d="M10 8h5v5h-5z" fill="#b5332c" />
        <circle cx="3.800" cy="3.600" r="3" fill="none" stroke="#d0342c" strokeWidth="1.200" />
        <path d="M2 5.500L5.800 1.700" stroke="#d0342c" />
      </svg>
      <svg viewBox="0 0 15 14" className="ml-3 h-[14px] w-[15px]" aria-hidden="true">
        <path d="M0 3h4v8H0z" fill="#8d8d8d" />
        <path d="M4 3l4-2v12l-4-2z" fill="#c4c4c4" />
        <circle cx="11" cy="6" r="3.600" fill="#d44a45" />
        <path d="M9 8l4-4" stroke="#fff" strokeWidth="1.300" />
      </svg>
      <span className="ml-[9px]">Motion Detection Alarm</span>
      <button type="button" aria-label="Pin" className="ml-auto">
        <svg viewBox="0 0 13 14" className="h-[14px] w-[13px]"><path d="M7.500 0L13 4.500l-1.300.8-1.200-.3-2.300 3.200.3 2.800-1.200.8-2.500-2L.8 14l-.6-.5L3.600 9 1 6.800l.9-1 2.700-.2L7.200 2.500 7 1z" fill="#fff" /></svg>
      </button>
      <button type="button" aria-label="Window" className="ml-[18px]">
        <svg viewBox="0 0 9 8" className="h-2 w-[9px]"><path d="M.6.5h7.800v7H.6z" fill="none" stroke="#fff" strokeWidth="1.200" /><path d="M0 0h9v3H0z" fill="#fff" /></svg>
      </button>
      <button type="button" aria-label="Expand" className="ml-[21px]">
        <svg viewBox="0 0 9 11" className="h-[11px] w-[9px]"><path d="M1 5l3.500-3.500L8 5M1 10l3.500-3.500L8 10" fill="none" stroke="#fff" strokeWidth="1.700" /></svg>
      </button>
    </footer>
  );
}

/* ---------- Windows taskbar ---------- */

const TASKS: { name: string; size: string; state?: 'open' | 'active'; art: React.ReactNode }[] = [
  {
    name: 'Start',
    size: 'size-4',
    art: <path d="M0 3.400l9.800-1.300v9.400H0zM11 1.900L24 0v11.500H11zM0 12.700h9.800v9.400L0 20.700zM11 12.700h13V24l-13-1.800z" fill="#fff" />,
  },
  {
    name: 'Task View',
    size: 'size-4',
    art: <path d="M0 0v4h15V0M0 24v-4h15v4M0 8h15v8.500H0zM21 0v5M21 10v14M19.500 7.500h3" fill="none" stroke="#fff" strokeWidth="1.800" />,
  },
  {
    name: 'Edge',
    size: 'size-[21px]',
    art: (
      <path
        d="M1 10.500C2 4 7 0 12.500 0 19 0 23 4.500 23 10.500V14H8.500c.2 3.500 3 5.500 6.500 5.500 2.500 0 4.800-.7 6.800-1.900v4.600C19.800 23.400 17 24 14.300 24 8 24 3.500 20 3.500 14.500c0-3.800 2-6.600 5-8.300C5.200 6.600 2.700 8.300 1 10.500zM8.700 10h8.600c0-2.800-1.300-4.600-4-4.600-2.500 0-4.200 1.800-4.600 4.600z"
        fill="#0f7bdc"
      />
    ),
  },
  {
    name: 'File Explorer',
    size: 'size-[22px]',
    art: (
      <>
        <path d="M0 2h9l2 3h13v16H0z" fill="#e8a92e" />
        <path d="M0 7h24v14H0z" fill="#fad06a" />
        <path d="M4 23v-9h16v9h-4v-4.500H8V23z" fill="#3d8fd1" />
      </>
    ),
  },
  {
    name: 'Chrome',
    size: 'size-[22px]',
    art: (
      <>
        <circle cx="12" cy="12" r="12" fill="#fbc116" />
        <path d="M12 6h10.400A12 12 0 0 0 1.600 6L7 15z" fill="#e33b2e" />
        <path d="M1.600 6A12 12 0 0 0 12 24l5-9-10 0z" fill="#2da94f" />
        <circle cx="12" cy="12" r="5.600" fill="#fff" />
        <circle cx="12" cy="12" r="4.400" fill="#4285f4" />
      </>
    ),
  },
  {
    name: 'Game',
    size: 'size-6',
    art: (
      <>
        <path d="M0 0h24v24H0z" fill="#c7a184" />
        <path d="M0 0h24v9l-3-3-3 3-3-5-6 1-4 5-5 2z" fill="#6b3c25" />
        <path d="M2 0h6L5 4zM17 0h7v4z" fill="#e2d6c8" />
        <path d="M7 6l8-2 3 5-1 7-5 4-5-5z" fill="#e3b892" />
        <path d="M8 9l4 .5M14 9l3-.8" stroke="#3a1f14" strokeWidth="1.400" />
        <path d="M11 14.500h4" stroke="#9b4a3a" />
        <path d="M0 12l6 2 3 6-4 4H0z" fill="#d9d2c7" />
        <path d="M19 8l5 3v7l-5-2z" fill="#4b4036" />
        <path d="M3 19l4-2 3 2 4-3 3 3-1 5H4z" fill="#7d3d1e" />
        <path d="M5 21.500l3-2 2 2 4-4" fill="none" stroke="#f2d27a" strokeWidth="1.500" />
        <circle cx="20" cy="20.500" r="3.400" fill="#e86a6a" />
      </>
    ),
  },
  {
    name: 'Photoshop',
    size: 'size-[22px]',
    art: (
      <>
        <path d="M1 1h22v22H1z" fill="#071c2c" stroke="#31a8e8" strokeWidth="1.600" />
        <text x="12" y="17" textAnchor="middle" fontSize="14" fontWeight="600" fontFamily="Open Sans, sans-serif" fill="#31a8e8">Ps</text>
      </>
    ),
  },
  {
    name: 'OBS',
    size: 'size-[22px]',
    state: 'open',
    art: (
      <>
        <circle cx="12" cy="12" r="11" fill="#302e31" stroke="#c4c4c4" strokeWidth="1.400" />
        <path d="M12 11.500c-4-1-5-4.500-3-8M12.500 12c3-3 7-1.500 8 2M11.500 12.500c1 4-2.500 7-6 5.500" fill="none" stroke="#c4c4c4" strokeWidth="1.800" />
        <circle cx="12" cy="12" r="1.500" fill="#c4c4c4" />
      </>
    ),
  },
  {
    name: 'Internet Explorer',
    size: 'size-[22px]',
    state: 'open',
    art: (
      <>
        <path d="M12.500 2.500c6 0 10 4.500 10 11.500H8.500c.3 2.500 2 4 4.500 4 1.800 0 3-.7 3.800-2h5C20.800 20.500 17.500 23 12.800 23 7 23 3 18.800 3 12.800S7 2.500 12.500 2.500zM8.600 10.800h8.200c-.3-2.300-1.800-3.800-4.200-3.800-2.200 0-3.600 1.500-4 3.800z" fill="#56c0ee" />
        <path d="M23 5c.5-3-3-5.500-9-2C6.500 7.500-.5 17.500 1.500 22c1.200 2.200 4.500 1 6.500-.5" fill="none" stroke="#f0c22e" strokeWidth="2" />
      </>
    ),
  },
  { name: 'iVMS-4200', size: 'size-6', state: 'open', art: <CameraLogo /> },
  { name: 'iVMS-4200 Configuration', size: 'size-6', state: 'active', art: <CameraLogo /> },
];

function Taskbar() {
  return (
    <div className="flex h-10 bg-linear-to-r from-[#293c47] to-[#1d2c36] font-['Open_Sans',sans-serif] text-[11px] text-white">
      {TASKS.map(t => (
        <button
          key={t.name}
          type="button"
          aria-label={t.name}
          className={clsx('relative flex w-[49px] items-center justify-center', t.state === 'active' && 'bg-[#4d5c65]')}
        >
          <svg viewBox="0 0 24 24" className={clsx(t.size, 'overflow-visible')} aria-hidden="true">{t.art}</svg>
          {t.state && (
            <span className={clsx('absolute bottom-0 h-0.5 bg-[#6fb0e8]', t.state === 'active' ? 'inset-x-0' : 'inset-x-1')} />
          )}
        </button>
      ))}
      <div className="ml-auto flex items-center">
        <button type="button" aria-label="Show hidden icons">
          <svg viewBox="0 0 12 7" className="h-[7px] w-3"><path d="M.5 6.500L6 1l5.500 5.500" fill="none" stroke="#fff" strokeWidth="1.200" /></svg>
        </button>
        <svg viewBox="0 0 16 13" className="ml-[10px] h-[13px] w-4" aria-hidden="true">
          <path d="M5 2.500h10.500v7H3V5M9 9.500v3M5.500 12.500h7M.5.5H4v3.500H.5zM2.200 4v5" fill="none" stroke="#fff" />
        </svg>
        <svg viewBox="0 0 16 13" className="ml-2 h-[13px] w-4" aria-hidden="true">
          <path d="M.5 4.500H3l3.500-3.500v11L3 8.500H.5zM8.500 4.500c1 1.200 1 2.800 0 4" fill="none" stroke="#fff" />
          <path d="M10.700 3c1.700 2 1.700 5 0 7M13 1.500c2.500 3 2.500 7 0 10" fill="none" stroke="#8b979e" />
        </svg>
        <span className="ml-[10px]">ENG</span>
        <div className="ml-[13px] text-center leading-[18px]">
          <div>2:14 PM</div>
          <div>6/20/2020</div>
        </div>
        <button type="button" aria-label="Notifications" className="relative ml-[18px] mr-3 h-7 w-6">
          <svg viewBox="0 0 24 28" className="h-7 w-6">
            <path d="M0 5h16v13h-7l-3 3.500V18H0z" fill="#fff" />
            <path d="M3 8.500h10M3 11.500h10M3 14.500h7" stroke="#24343f" />
            <circle cx="15.500" cy="20" r="7.500" fill="#2b3740" stroke="#9aa3a9" />
          </svg>
          <span className="absolute left-3 top-3 text-xs leading-4">1</span>
        </button>
        <span className="mr-1 h-10 border-l border-[#6b767d]" />
      </div>
    </div>
  );
}

export default function App() {
  return (
    <div className="relative flex min-h-screen flex-col bg-[#ebebeb] font-['Liberation_Sans',Arial,sans-serif]">
      <TitleBar />
      <ModuleBar />
      <PageTabs />
      <main className="flex flex-1 gap-[6px] border-x-2 border-[#d4d4d4] pb-[10px] pl-[11px] pr-[9px] pt-[6px]">
        <DeviceTypePanel />
        <div className="flex min-w-0 flex-1 flex-col gap-[6px]">
          <ManagementPanel />
          <OnlinePanel />
        </div>
      </main>
      <AlarmBar />
      <Taskbar />
      <ConfigurationWindow />
    </div>
  );
}
